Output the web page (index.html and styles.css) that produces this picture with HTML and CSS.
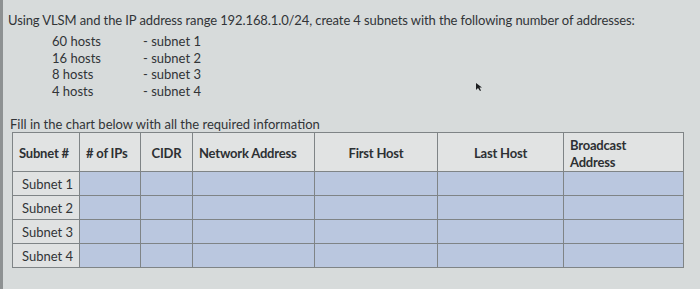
FILE: index.html
```html
<!DOCTYPE html>
<html lang="en">
<head>
    <meta charset="UTF-8">
    <meta name="viewport" content="width=device-width, initial-scale=1.0">
    <title>VLSM Subnetting Worksheet</title>
    <link rel="stylesheet" href="styles.css">
</head>
<body>
    <div class="page">
        <p class="intro">Using VLSM and the IP address range 192.168.1.0/24, create 4 subnets with the following number of addresses:</p>

        <div class="hosts">
            <span>60 hosts</span><span>- subnet 1</span>
            <span>16 hosts</span><span>- subnet 2</span>
            <span>8 hosts</span><span>- subnet 3</span>
            <span>4 hosts</span><span>- subnet 4</span>
        </div>

        <p class="prompt">Fill in the chart below with all the required information</p>

        <table class="chart">
            <colgroup>
                <col style="width: 67px">
                <col style="width: 61px">
                <col style="width: 52px">
                <col style="width: 122px">
                <col style="width: 123px">
                <col style="width: 126px">
                <col style="width: 120px">
            </colgroup>
            <thead>
                <tr>
                    <th>Subnet #</th>
                    <th># of IPs</th>
                    <th class="center">CIDR</th>
                    <th>Network Address</th>
                    <th class="center">First Host</th>
                    <th class="center">Last Host</th>
                    <th>Broadcast<br>Address</th>
                </tr>
            </thead>
            <tbody>
                <tr><td class="label">Subnet 1</td><td></td><td></td><td></td><td></td><td></td><td></td></tr>
                <tr><td class="label">Subnet 2</td><td></td><td></td><td></td><td></td><td></td><td></td></tr>
                <tr><td class="label">Subnet 3</td><td></td><td></td><td></td><td></td><td></td><td></td></tr>
                <tr><td class="label">Subnet 4</td><td></td><td></td><td></td><td></td><td></td><td></td></tr>
            </tbody>
        </table>

        <!-- mouse pointer left on the sheet -->
        <svg class="pointer" width="8" height="10" viewBox="0 0 8 10">
            <path d="M1 1 L1 8 L3 6 L5 9 L6 8.5 L4.5 5.5 L7 5.5 Z" fill="#1c1e20"/>
        </svg>
    </div>
</body>
</html>
```

FILE: styles.css
```css
body {
    margin: 0;
    background-color: #d7dbdb;
    font-family: Lato, "Open Sans", sans-serif;
    font-size: 13px;
    color: #313437;
}
.page {
    position: relative;
    height: 289px;
    box-sizing: border-box;
    border-left: 3px solid #8d9192;
    padding: 12px 0 0 5px;
}
p {
    margin: 0;
    line-height: 16px;
}
.intro {
    letter-spacing: -0.1px;
}
.hosts {
    display: grid;
    grid-template-columns: 91px auto;
    margin: 5px 0 0 44px;
    line-height: 16.5px;
}
.prompt {
    margin: 17px 0 0 2px;
}
.chart {
    margin-left: 4px;
    border-collapse: collapse;
    table-layout: fixed;
    width: 671px;
}
.chart th,
.chart td {
    border: 1px solid #7f8486;
    padding: 0 0 0 6px;
}
.chart th {
    height: 35px;
    padding-top: 3px;
    background-color: #e1e3e3;
    font-weight: bold;
    text-align: left;
    line-height: 17px;
    letter-spacing: -0.2px;
    color: #2d3033;
}
.chart th.center {
    text-align: center;
    padding-left: 0;
}
.chart td {
    height: 23px;
    background-color: #bac7df;
}
.chart td.label {
    background-color: #e0e2e2;
    padding-left: 9px;
}
.pointer {
    position: absolute;
    left: 472px;
    top: 82px;
}
```
